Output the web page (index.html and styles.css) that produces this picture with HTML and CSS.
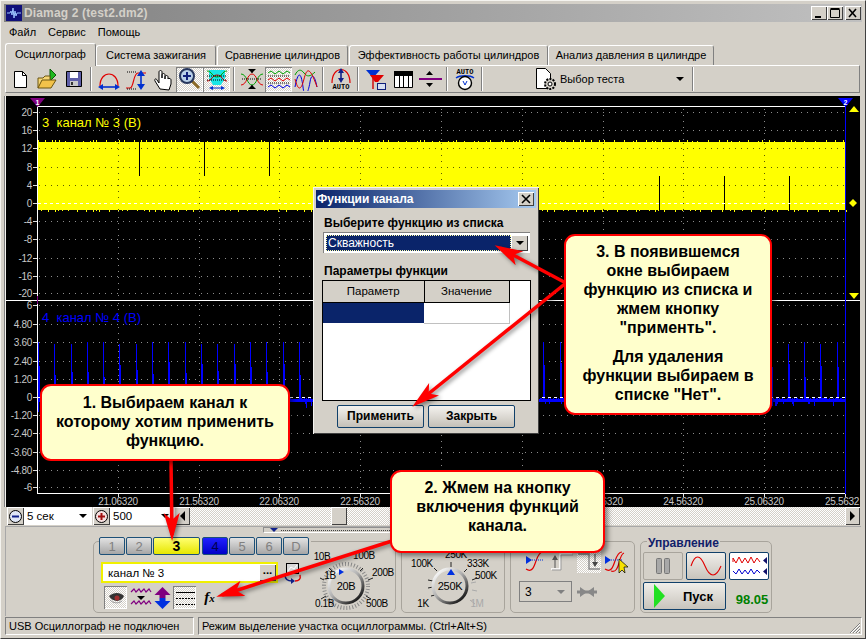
FILE: index.html
```html
<!DOCTYPE html>
<html lang="ru">
<head>
    <meta charset="UTF-8">
    <title>Diamag 2 (test2.dm2)</title>
    <link rel="stylesheet" href="styles.css">
</head>
<body>

<div class="window">

    <div class="titlebar">
        <svg class="app-icon" width="16" height="16" viewBox="0 0 16 16"><rect width="16" height="16" fill="#10107a"/><path d="M1 8h3l1-2 1 4 1-7 1 10 1-7 1 5 1-3h4" fill="none" stroke="#9cc4ff"/></svg>
        <span class="title-text">Diamag 2 (test2.dm2)</span>
        <div class="caption-btn cap-min"><svg width="15" height="14" viewBox="0 0 15 14"><rect x="4" y="10" width="6" height="2" fill="#000"/></svg></div>
        <div class="caption-btn cap-max"><svg width="15" height="14" viewBox="0 0 15 14"><path d="M3.5 3.5h9v8h-9z M3.5 2.5h9" fill="none" stroke="#000"/></svg></div>
        <div class="caption-btn cap-close"><svg width="15" height="14" viewBox="0 0 15 14"><path d="M4 3l7 8M11 3l-7 8" stroke="#000" stroke-width="1.6"/></svg></div>
    </div>

    <div class="menubar">
        <span>Файл</span><span>Сервис</span><span>Помощь</span>
    </div>

    <div class="tabs">
        <div class="tab tab-active">Осциллограф</div>
        <div class="tab tab-2">Система зажигания</div>
        <div class="tab tab-3">Сравнение цилиндров</div>
        <div class="tab tab-4">Эффективность работы цилиндров</div>
        <div class="tab tab-5">Анализ давления в цилиндре</div>
    </div>

    <div class="toolbar">
        <div class="tool"><svg width="24" height="24" viewBox="0 0 24 24"><path d="M6.5 4.5h8l4 4v12h-12z" fill="#fff" stroke="#000"/><path d="M14.5 4.5v4h4" fill="none" stroke="#000"/></svg></div>
        <div class="tool"><svg width="24" height="24" viewBox="0 0 24 24"><path d="M15 2l6 6-6 6z" fill="#1fb81f" stroke="#0a5a0a"/><path d="M3 21V11h5l2-2h5v3" fill="#f6d675" stroke="#6b5410"/><path d="M3 21l4-8h14l-5 8z" fill="#f2c24a" stroke="#6b5410"/></svg></div>
        <div class="tool"><svg width="24" height="24" viewBox="0 0 24 24"><path d="M4.500 4.500h15v15h-15z" fill="#5f5fa8" stroke="#000"/><rect x="8" y="5" width="8" height="6" fill="#fff"/><rect x="8" y="14" width="8" height="5" fill="#c8c8c8"/><rect x="9" y="15" width="2" height="3" fill="#333"/></svg></div>
        <div class="tool-sep"></div>
        <div class="tool"><svg width="24" height="24" viewBox="0 0 24 24"><path d="M3 19C3 3 21 3 21 19" fill="none" stroke="#e00000" stroke-width="1.2"/><path d="M4 20h16" stroke="#0030d0" stroke-width="1.6"/><path d="M1 20l5-3v6zM23 20l-5-3v6z" fill="#0030d0"/></svg></div>
        <div class="tool"><svg width="24" height="24" viewBox="0 0 24 24"><path d="M2 21h4c4 0 3-15 8-15h8" fill="none" stroke="#e00000" stroke-width="1.2"/><path d="M3 5h10M3 22h9" stroke="#000" stroke-dasharray="1 1"/><path d="M17 8v12" stroke="#0030d0" stroke-width="1.6"/><path d="M17 3l4 6h-8zM17 23l4-6h-8z" fill="#0030d0"/></svg></div>
        <div class="tool"><svg width="24" height="24" viewBox="0 0 24 24"><path d="M9 22l-5-8c-1-2 1-3 2-1l2 3V5c0-2 3-2 3 0v6-3c0-2 3-2 3 0v4-2c0-2 3-2 3 0v2c0-1 3-1 3 1v4l-2 6z" fill="#fff" stroke="#000"/></svg></div>
        <div class="tool tool-on"><svg width="24" height="24" viewBox="0 0 24 24"><path d="M14 14l7 7" stroke="#8a6a28" stroke-width="3"/><circle cx="9" cy="9" r="7" fill="#b8d0e8" stroke="#26365c" stroke-width="2"/><path d="M5 9h8M9 5v8" stroke="#10207a" stroke-width="2"/></svg></div>
        <div class="tool tool-on"><svg width="24" height="24" viewBox="0 0 24 24"><path d="M4 3h16v8l-4 7H8l-4-7z" fill="#19e6e6"/><path d="M2 4c5 0 5 6 10 6s5-6 10-6" fill="none" stroke="#00a000"/><path d="M2 14c5 0 5-6 10-6s5 6 10 6" fill="none" stroke="#d00000"/><path d="M2 9h20M2 13h20" stroke="#000" stroke-dasharray="1 1"/><path d="M6 21h12" stroke="#0030d0"/><path d="M4 21l4-2v4zM20 21l-4-2v4z" fill="#0030d0"/></svg></div>
        <div class="tool-sep"></div>
        <div class="tool"><svg width="24" height="24" viewBox="0 0 24 24"><path d="M1 7c6 0 6 11 11 11s5-11 11-11" fill="none" stroke="#00a000"/><path d="M1 18c6 0 6-11 11-11s5 11 11 11" fill="none" stroke="#e00000"/><path d="M2 12h20" stroke="#000" stroke-dasharray="1 1"/><path d="M12 3v3M12 18v3" stroke="#000"/><path d="M8 2h8l-4 4zM8 22h8l-4-4z" fill="#000"/></svg></div>
        <div class="tool tool-on"><svg width="24" height="24" viewBox="0 0 24 24"><path d="M1 6l3-2 4 3 4-3 4 3 4-3 3 2" fill="none" stroke="#00a000"/><path d="M1 13l3-2 4 3 4-3 4 3 4-3 3 2" fill="none" stroke="#e00000"/><path d="M1 20l3-2 4 3 4-3 4 3 4-3 3 2" fill="none" stroke="#0000e0"/><path d="M1 9h22M1 16h22" stroke="#000" stroke-dasharray="1 1"/></svg></div>
        <div class="tool"><svg width="24" height="24" viewBox="0 0 24 24"><path d="M1 8c3-6 6-6 9-2s6 4 11-1" fill="none" stroke="#00a000"/><path d="M1 20c3-16 6-16 8 0s6 2 7-5 4-10 7 5" fill="none" stroke="#0000e0"/><path d="M1 12c3 12 6 12 9 0s6-12 13 8" fill="none" stroke="#e00000"/></svg></div>
        <div class="tool-sep"></div>
        <div class="tool"><svg width="24" height="24" viewBox="0 0 24 24"><path d="M3 16C3 -2 21 -2 21 16" fill="none" stroke="#e00000" stroke-width="1.2"/><path d="M12 4v9" stroke="#10208a" stroke-width="1.6"/><path d="M12 1l3 5H9zM12 16l3-5H9z" fill="#10208a"/><text class="icon-auto" x="12" y="22" text-anchor="middle">AUTO</text></svg></div>
        <div class="tool-sep"></div>
        <div class="tool"><svg width="24" height="24" viewBox="0 0 24 24"><path d="M2 3h14l-7 8z" fill="#0030d0"/><path d="M9 11v11" stroke="#d00000" stroke-width="1.4"/><path d="M6 8h14l-6 7h-3z" fill="#e00000"/><rect x="13.500" y="16.500" width="8" height="6" fill="#d8e0f0" stroke="#10207a"/></svg></div>
        <div class="tool"><svg width="24" height="24" viewBox="0 0 24 24"><path d="M3.500 4.500h18v16h-18z M3.500 8.500h18 M8.500 4.500v16 M12.500 4.500v16 M17.500 4.500v16" fill="#fff" stroke="#000"/><rect x="3" y="4" width="19" height="4" fill="#000"/></svg></div>
        <div class="tool"><svg width="24" height="24" viewBox="0 0 24 24"><path d="M1 12h23" stroke="#800080" stroke-width="2"/><path d="M8 8h7l-3.500-4zM8 16h7l-3.500 4z" fill="#000"/></svg></div>
        <div class="tool-sep"></div>
        <div class="tool"><svg width="24" height="24" viewBox="0 0 24 24"><text class="icon-auto" x="12" y="7" text-anchor="middle">AUTO</text><path d="M3 11c4-3 14-3 18 0" fill="none" stroke="#0030d0" stroke-width="1.4"/><circle cx="12" cy="16" r="6.500" fill="#fff" stroke="#000" stroke-width="1.4"/><path d="M10 14l2 4 2-4" fill="none" stroke="#0030d0"/></svg></div>
        <div class="tool-sep"></div>
        <div class="test-select">
            <svg width="24" height="24" viewBox="0 0 24 24"><path d="M2.500 1.500h9l5 5v15h-14z" fill="#fff" stroke="#000"/><circle cx="16" cy="17" r="5" fill="#d4d0c8" stroke="#000" stroke-width="2" stroke-dasharray="2 1.200"/><circle cx="16" cy="17" r="2" fill="#fff" stroke="#000"/></svg>
            <span class="test-label">Выбор теста</span>
            <span class="drop-arrow"></span>
        </div>
        <div class="tool-sep"></div>
    </div>

    <div class="scope">
        <svg id="plot" width="854" height="412" viewBox="6 96 854 412"></svg>
    </div>

    <div class="scrollrow">
        <div class="small-btn"><svg width="15" height="15" viewBox="0 0 15 15"><circle cx="7.500" cy="7.500" r="6" fill="#dfe6f5" stroke="#000"/><path d="M4 7.500h7" stroke="#10208a" stroke-width="2"/></svg></div>
        <div class="time-combo combo-sec"><span>5 сек</span><span class="drop-arrow"></span></div>
        <div class="small-btn btn-plus"><svg width="15" height="15" viewBox="0 0 15 15"><circle cx="7.500" cy="7.500" r="6" fill="#f5dfdf" stroke="#000"/><path d="M4 7.500h7M7.500 4v7" stroke="#a01010" stroke-width="2"/></svg></div>
        <div class="time-combo combo-pts"><span>500</span><span class="drop-arrow"></span></div>
        <div class="small-btn scroll-left"><span class="tri-left"></span></div>
        <div class="track"><div class="thumb"></div></div>
        <div class="small-btn scroll-right"><span class="tri-right"></span></div>
    </div>

    <div class="bottom">
        <div class="splitter"><span class="tri-down"></span><span class="split-dots"></span></div>
        <div class="groups">

            <div class="group group-channels">
                <div class="channel-col">
                    <div class="channels">
                        <div class="ch">1</div>
                        <div class="ch">2</div>
                        <div class="ch ch-yellow">3</div>
                        <div class="ch ch-blue">4</div>
                        <div class="ch">5</div>
                        <div class="ch">6</div>
                        <div class="ch">D</div>
                    </div>
                    <div class="name-row">
                        <div class="name-box"><span>канал № 3</span><div class="dots-btn">...</div></div>
                        <svg width="18" height="22" viewBox="0 0 18 22"><rect x="2.500" y="1.500" width="12" height="10" fill="#d8d8d8" stroke="#000"/><path d="M4 9l3-4 3 2 3-4" fill="none" stroke="#fff"/><path d="M1 13c0 5 3 6 7 6" fill="none" stroke="#10208a" stroke-width="1.400"/><path d="M7 16v6l4-3z" fill="#10208a"/><path d="M16 13c1 4-1 6-5 6" fill="none" stroke="#e00000" stroke-width="1.400"/></svg>
                    </div>
                    <div class="icon-row">
                        <div class="mini mini-on"><svg width="22" height="22" viewBox="0 0 22 22"><path d="M4 9c5-4 11-4 15 0-2 6-11 7-15 0z" fill="#333"/><circle cx="12" cy="11" r="2.500" fill="#a03030"/><path d="M5 13c3 3 8 4 12 1" fill="none" stroke="#999"/></svg></div>
                        <div class="mini"><svg width="22" height="22" viewBox="0 0 22 22"><path d="M1 5l3-3 2 3 3-3 2 3 3-3 2 3 3-3 2 3" fill="none" stroke="#800080" stroke-width="1.200"/><path d="M1 17l3-3 2 3 3-3 2 3 3-3 2 3 3-3 2 3" fill="none" stroke="#800080" stroke-width="1.200"/><path d="M7 9h8l-4 4z" fill="#000"/></svg></div>
                        <div class="mini mini-arrows"><svg width="17" height="22" viewBox="0 0 17 22"><path d="M8.500 0l8 8h-5v3h-6V8h-5z" fill="#800080"/><path d="M8.500 22l8-8h-5v-3h-6v3h-5z" fill="#0030e0"/></svg></div>
                        <div class="mini mini-on"><svg width="22" height="22" viewBox="0 0 22 22"><path d="M2 5.500h19" stroke="#000"/><path d="M2 11.500h19M2 17.500h19" stroke="#000" stroke-dasharray="2 1"/></svg></div>
                        <div class="mini fx"><span>f</span><span class="fx-x">x</span></div>
                    </div>
                </div>
                <svg class="knob-svg" width="84" height="70" viewBox="311 544 84 70">
                    <defs>
                        <linearGradient id="ring" x1="0.150" y1="0.100" x2="0.850" y2="0.900">
                            <stop offset="0" stop-color="#f4f4f4"/><stop offset="0.450" stop-color="#b0b0b0"/><stop offset="1" stop-color="#1c1c1c"/>
                        </linearGradient>
                    </defs>
                    <circle cx="346" cy="588" r="22" fill="none" stroke="#888" stroke-width="4" stroke-dasharray="1 2"/>
                    <path d="M332 573l-3-3M360 573l3-3M368 582l5-2M324 582l-4-2M326 598l-5 3M366 598l5 3" stroke="#222"/>
                    <circle cx="346" cy="588" r="17" fill="#d4d0c8" stroke="url(#ring)" stroke-width="3"/>
                    <path d="M339 571v6l5-3z" fill="#0030e0"/>
                    <text class="knob-val" x="346" y="592" text-anchor="middle">20В</text>
                    <text class="knob-lbl" x="322" y="562" text-anchor="middle">10В</text>
                    <text class="knob-lbl" x="364" y="561" text-anchor="middle">100В</text>
                    <text class="knob-lbl" x="383" y="578" text-anchor="middle">200В</text>
                    <text class="knob-lbl" x="330" y="581" text-anchor="middle">1В</text>
                    <text class="knob-lbl" x="315" y="609" text-anchor="start">0.1В</text>
                    <text class="knob-lbl" x="377" y="609" text-anchor="middle">500В</text>
                </svg>
            </div>

            <div class="group group-time">
                <svg class="knob-svg" width="102" height="70" viewBox="402 544 102 70">
                    <defs>
                        <linearGradient id="ring2" x1="0.150" y1="0.100" x2="0.850" y2="0.900">
                            <stop offset="0" stop-color="#f4f4f4"/><stop offset="0.450" stop-color="#b0b0b0"/><stop offset="1" stop-color="#1c1c1c"/>
                        </linearGradient>
                    </defs>
                    <path d="M451 569v-5M437 573l-3-3M464 574l3-3M472 582l5-2M428 582l5 1M428 590l5-1M431 598l4-1" stroke="#222"/>
                    <path d="M470 602l5 4M472 592l5 1M471 585l5-1" stroke="#aaa"/>
                    <circle cx="450" cy="588" r="17" fill="#d4d0c8" stroke="url(#ring2)" stroke-width="3"/>
                    <path d="M451 571l4 6h-8z" fill="#0030e0"/>
                    <text class="knob-val" x="450" y="592" text-anchor="middle">250K</text>
                    <text class="knob-lbl" x="456" y="560" text-anchor="middle">250K</text>
                    <text class="knob-lbl" x="422" y="569" text-anchor="middle">100K</text>
                    <text class="knob-lbl" x="478" y="569" text-anchor="middle">333K</text>
                    <text class="knob-lbl" x="486" y="581" text-anchor="middle">500K</text>
                    <text class="knob-lbl" x="423" y="609" text-anchor="middle">1K</text>
                    <text class="knob-lbl knob-off" x="477" y="609" text-anchor="middle">1M</text>
                </svg>
            </div>

            <div class="group group-sync">
                <div class="sync-icons">
                    <div class="sync-icon"><svg width="24" height="24" viewBox="0 0 24 24"><path d="M3 20c6 4 8-2 10-8s4-9 7-9" fill="none" stroke="#e00000" stroke-width="1.200"/><path d="M7 11h14" stroke="#0030e0" stroke-dasharray="1 1"/><path d="M3 7v8l6-4z" fill="#0030e0"/></svg></div>
                    <div class="sync-icon"><svg width="24" height="24" viewBox="0 0 24 24"><path d="M1 20h9V5h12" fill="none" stroke="#fff" stroke-width="1.600"/><path d="M2 21h9V6h12" fill="none" stroke="#999"/><path d="M5 10v9" stroke="#555"/><path d="M5 6l3 5H2z" fill="#555"/></svg></div>
                    <div class="sync-icon sync-on"><svg width="24" height="24" viewBox="0 0 24 24"><path d="M1 5h11v15h11" fill="none" stroke="#888" stroke-width="1.400"/><path d="M18 5v9" stroke="#444"/><path d="M18 18l3-5h-6z" fill="#444"/></svg></div>
                    <div class="sync-icon"><svg width="24" height="24" viewBox="0 0 24 24"><path d="M1 20c6 4 8-2 10-8s4-9 7-9" fill="none" stroke="#e00000" stroke-width="1.200"/><path d="M7 22c5 2 7-4 8-8s2-9 5-10" fill="none" stroke="#e00000" stroke-width="1.200"/><path d="M5 11h14" stroke="#0030e0" stroke-dasharray="1 1"/><path d="M1 7v8l6-4z" fill="#0030e0"/><path d="M15 10v14l3-3 3 3-1-6h4z" fill="#f6e000" stroke="#000" stroke-width="0.700"/></svg></div>
                </div>
                <div class="sync-row">
                    <div class="combo-off"><span>3</span><span class="drop-arrow arrow-off"></span></div>
                    <svg width="20" height="12" viewBox="0 0 20 12"><path d="M0 6h20" stroke="#888" stroke-width="3"/><path d="M3 1l7 5-7 5zM17 1l-7 5 7 5z" fill="#888"/></svg>
                </div>
            </div>

            <div class="group group-control">
                <div class="control-title">Управление</div>
                <div class="control-grid">
                    <div class="ctl ctl-flat"><svg width="20" height="20" viewBox="0 0 20 20"><rect x="3.500" y="2.500" width="5" height="15" rx="1" fill="#a8a8a8" stroke="#777"/><rect x="11.500" y="2.500" width="5" height="15" rx="1" fill="#a8a8a8" stroke="#777"/></svg></div>
                    <div class="ctl"><svg width="34" height="26" viewBox="0 0 34 26"><path d="M2 13C6 1 11 1 16 13s11 12 16 0" fill="none" stroke="#e00000" stroke-width="1.100"/></svg></div>
                    <div class="ctl ctl-white"><svg width="36" height="24" viewBox="0 0 36 24"><path d="M2 8V4l3 5 3-6 3 6 3-5 3 5 3-6 3 6 3-5 3 4" fill="none" stroke="#e00000"/><path d="M2 17l3 3 3-5 3 5 3-4 3 4 3-5 3 5 3-4 3 3" fill="none" stroke="#0000d0"/><path d="M36 3v7l-4-3.500zM36 14v7l-4-3.500z" fill="#10106a"/></svg></div>
                    <div class="ctl ctl-run"><svg width="12" height="26" viewBox="0 0 12 26"><path d="M1 1l11 12L1 25z" fill="#22e022"/></svg><span>Пуск</span></div>
                    <div class="rate">98.05</div>
                </div>
            </div>

        </div>
    </div>

    <div class="statusbar">
        <div class="status-cell status-left">USB Осциллограф не подключен</div>
        <div class="status-cell status-right">Режим выделение участка осциллограммы. (Ctrl+Alt+S)
            <svg class="grip" width="13" height="13" viewBox="0 0 13 13"><path d="M12 2L2 12M12 5l-7 7M12 8l-4 4M12 11l-1 1" stroke="#808080"/><path d="M12 3L3 12M12 6l-6 6M12 9l-3 3" stroke="#fff"/></svg>
        </div>
    </div>
</div>

<div class="dialog">
    <div class="dialog-title">
        <span>Функции канала</span>
        <div class="dialog-close"><svg width="16" height="14" viewBox="0 0 16 14"><path d="M4 3l8 8M12 3l-8 8" stroke="#000" stroke-width="1.600"/></svg></div>
    </div>
    <div class="dialog-body">
        <div class="dialog-label">Выберите функцию из списка</div>
        <div class="func-combo">
            <div class="func-value">Скважность</div>
            <div class="func-btn"><span class="drop-arrow"></span></div>
        </div>
        <div class="dialog-label label-params">Параметры функции</div>
        <div class="params">
            <table>
                <tr><th class="col-a">Параметр</th><th class="col-b">Значение</th></tr>
                <tr><td class="cell-sel"></td><td class="cell-empty"></td></tr>
            </table>
        </div>
        <div class="dialog-buttons">
            <div class="dlg-btn">Применить</div>
            <div class="dlg-btn">Закрыть</div>
        </div>
    </div>
</div>

<svg class="arrows" width="866" height="639" viewBox="0 0 866 639">
    <defs>
        <marker id="head" markerUnits="userSpaceOnUse" markerWidth="30" markerHeight="18" refX="22" refY="8" orient="auto">
            <polygon points="0,0 28,8 0,16 7,8" fill="#ff0000"/>
        </marker>
    </defs>
    <line x1="171" y1="461" x2="172" y2="535" marker-end="url(#head)"/>
    <line x1="392" y1="541" x2="222" y2="595" marker-end="url(#head)"/>
    <line x1="566" y1="283" x2="500" y2="248" marker-end="url(#head)"/>
    <line x1="566" y1="283" x2="417" y2="403" marker-end="url(#head)"/>
</svg>

<div class="callout callout-1">1. Выбираем канал к<br>которому хотим применить<br>функцию.</div>
<div class="callout callout-2">2. Жмем на кнопку<br>включения функций<br>канала.</div>
<div class="callout callout-3">
    <p>3. В появившемся<br>окне выбираем<br>функцию из списка и<br>жмем кнопку<br>"применть".</p>
    <p>Для удаления<br>функции выбираем в<br>списке "Нет".</p>
</div>

<script src="scope.js"></script>
</body>
</html>
```

FILE: styles.css
```css
* {
    box-sizing: border-box;
}
body {
    margin: 0;
    width: 866px;
    height: 639px;
    overflow: hidden;
    position: relative;
    font-family: "Liberation Sans", Arial, sans-serif;
    font-size: 11px;
    color: #000;
    background: #d4d0c8;
}
.window {
    width: 866px;
    height: 639px;
    padding: 4px 4px 3px;
    display: flex;
    flex-direction: column;
    background: #d4d0c8;
    border-top: 1px solid #f4f3ef;
    border-left: 1px solid #f4f3ef;
    border-right: 1px solid #404040;
    border-bottom: 1px solid #404040;
}

/* title and menu */
.titlebar {
    height: 18px;
    margin: -1px -1px 0 -1px;
    display: flex;
    align-items: center;
    padding: 0 1px 0 2px;
    background: linear-gradient(to right, #808080, #c0c0c0);
}
.app-icon {
    margin-right: 2px;
    flex: none;
}
.title-text {
    flex: 1;
    font-weight: bold;
    font-size: 12px;
    letter-spacing: 0.15px;
    color: #d4d0c8;
}
.caption-btn {
    width: 16px;
    height: 14px;
    background: #d4d0c8;
    box-shadow: inset 1px 1px 0 #fff, inset -1px -1px 0 #404040;
}
.cap-close {
    margin-left: 2px;
}
.menubar {
    height: 20px;
    margin-left: 4px;
    display: flex;
    align-items: center;
    gap: 12px;
}

/* tabs */
.tabs {
    height: 23px;
    display: flex;
    align-items: flex-end;
    white-space: nowrap;
}
.tab {
    height: 20px;
    padding-top: 3px;
    text-align: center;
    background: #d4d0c8;
    border: 1px solid #fff;
    border-bottom: 0;
    border-right: 1px solid #808080;
    border-radius: 3px 3px 0 0;
}
.tab-active {
    width: 91px;
    height: 23px;
    margin-bottom: -1px;
    position: relative;
    z-index: 1;
    padding-top: 4px;
}
.tab-2 {
    width: 120px;
}
.tab-3 {
    width: 131px;
    margin-left: 1px;
}
.tab-4 {
    width: 199px;
    margin-left: 1px;
}
.tab-5 {
    width: 166px;
}

/* toolbar */
.toolbar {
    height: 28px;
    margin: 0 1px 3px 0;
    display: flex;
    align-items: center;
    border-top: 1px solid #fff;
    border-left: 1px solid #fff;
    border-right: 1px solid #808080;
    border-bottom: 1px solid #808080;
}
.tool {
    width: 27px;
    height: 25px;
    display: flex;
    align-items: center;
    justify-content: center;
}
.tool-on {
    background: repeating-conic-gradient(#fff 0 25%, #d4d0c8 0 50%) 0 0 / 2px 2px;
    box-shadow: inset 1px 1px 0 #808080, inset -1px -1px 0 #fff;
}
.tool-sep {
    width: 2px;
    height: 24px;
    margin: 0 3px;
    background: #808080;
    border-right: 1px solid #fff;
}
.icon-auto {
    font-family: "Liberation Mono", monospace;
    font-weight: bold;
    font-size: 7px;
    fill: #000;
}
.test-select {
    width: 203px;
    padding-left: 48px;
    display: flex;
    align-items: center;
}
.test-label {
    margin-left: 2px;
    flex: 1;
}
.test-select .drop-arrow {
    margin-right: 5px;
}
.drop-arrow {
    width: 0;
    height: 0;
    border-left: 4px solid transparent;
    border-right: 4px solid transparent;
    border-top: 4px solid #000;
    display: block;
    flex: none;
}
.arrow-off {
    border-top-color: #808080;
}

/* plot */
.scope {
    flex: 1;
    margin: 0 1px 0 1px;
    background: #000;
    box-shadow: -1px 0 0 #f4f3ef, -2px 0 0 #808080;
    min-height: 0;
}
#plot {
    display: block;
    shape-rendering: crispEdges;
    font-family: "Liberation Sans", Arial, sans-serif;
}
.axis-label {
    font-size: 10px;
    letter-spacing: -0.3px;
    fill: #c8c8c8;
}
.chan-name {
    font-size: 13px;
    white-space: pre;
}

/* horizontal scroll row */
.scrollrow {
    height: 19px;
    margin: 0 1px 0 2px;
    display: flex;
    align-items: flex-start;
    flex: none;
}
.small-btn {
    width: 17px;
    height: 18px;
    flex: none;
    display: flex;
    align-items: center;
    justify-content: center;
    background: #d4d0c8;
    box-shadow: inset 1px 1px 0 #fff, inset -1px -1px 0 #404040;
}
.btn-plus {
    margin-left: 1px;
}
.scroll-left {
    width: 16px;
}
.scroll-right {
    width: 15px;
}
.time-combo {
    height: 18px;
    flex: none;
    display: flex;
    align-items: center;
    justify-content: space-between;
    padding: 0 5px 0 3px;
    background: #fff;
    font-size: 11.500px;
}
.combo-sec {
    width: 68px;
}
.combo-pts {
    width: 64px;
}
.track {
    flex: 1;
    height: 18px;
    padding-left: 141px;
    background: repeating-conic-gradient(#fff 0 25%, #d4d0c8 0 50%) 0 0 / 2px 2px;
}
.thumb {
    width: 16px;
    height: 18px;
    background: #d4d0c8;
    box-shadow: inset 1px 1px 0 #fff, inset -1px -1px 0 #404040;
}
.tri-left {
    border-top: 5px solid transparent;
    border-bottom: 5px solid transparent;
    border-right: 5px solid #000;
}
.tri-right {
    border-top: 5px solid transparent;
    border-bottom: 5px solid transparent;
    border-left: 5px solid #000;
}

/* bottom panel */
.bottom {
    height: 90px;
    flex: none;
    border-top: 1px solid #a8a8a8;
    border-left: 1px solid #a8a8a8;
}
.splitter {
    width: 338px;
    height: 6px;
    margin: 0 0 8px 257px;
    padding: 0 0 0 6px;
    display: flex;
    align-items: center;
    gap: 3px;
    background: #d4d0c8;
    border: 1px solid #909090;
    border-bottom-color: #fff;
    border-right-color: #fff;
}
.split-dots {
    flex: 1;
    border-top: 1px dotted #404040;
}
.tri-down {
    border-left: 4px solid transparent;
    border-right: 4px solid transparent;
    border-top: 4px solid #10208a;
}
.groups {
    display: flex;
    gap: 5px;
    padding-left: 87px;
    height: 73px;
}
.group {
    height: 72px;
    border: 1px solid #a8a49c;
    border-radius: 5px;
    flex: none;
}
.group-channels {
    width: 303px;
    display: flex;
    justify-content: space-between;
}
.group-time {
    width: 104px;
}
.group-sync {
    width: 125px;
    padding: 7px 0 0 8px;
}
.group-control {
    width: 132px;
    padding: 0 2px;
}
.channel-col {
    width: 212px;
    margin: -5px 0 0 5px;
}
.channels {
    display: flex;
    gap: 1px;
    height: 18px;
    background: #d4d0c8;
}
.ch {
    width: 26px;
    height: 18px;
    text-align: center;
    line-height: 17px;
    font-size: 13px;
    color: #808080;
    background: linear-gradient(#e2e2e2, #a6a6a6);
    border: 1px solid #1d5078;
    border-radius: 2px;
}
.ch-yellow {
    width: 47px;
    color: #000;
    font-weight: bold;
    font-size: 14px;
    background: linear-gradient(#ffff70, #e6e600);
}
.ch-blue {
    margin-left: 1px;
    color: #000050;
    background: linear-gradient(#2020ff, #0000c8);
}
.name-row {
    display: flex;
    align-items: center;
    gap: 6px;
    margin: 7px 0 0 2px;
    height: 21px;
}
.name-box {
    width: 177px;
    height: 21px;
    flex: none;
    display: flex;
    align-items: center;
    justify-content: space-between;
    padding-left: 5px;
    background: #fff;
    border: 2px solid #f0f000;
    font-size: 11.500px;
}
.dots-btn {
    width: 17px;
    height: 17px;
    text-align: center;
    font-weight: bold;
    background: #d4d0c8;
    box-shadow: inset 1px 1px 0 #fff, inset -1px -1px 0 #404040;
}
.icon-row {
    display: flex;
    align-items: center;
    gap: 2px;
    margin: 3px 0 0 5px;
}
.mini {
    width: 23px;
    height: 23px;
    display: flex;
    align-items: center;
    justify-content: center;
}
.mini-arrows {
    width: 17px;
}
.mini-on {
    background: repeating-conic-gradient(#fff 0 25%, #d4d0c8 0 50%) 0 0 / 2px 2px;
    box-shadow: inset 1px 1px 0 #808080, inset -1px -1px 0 #fff;
}
.fx {
    font-family: "Liberation Serif", serif;
    font-style: italic;
    font-weight: bold;
    font-size: 15px;
}
.fx-x {
    font-size: 11px;
}
.knob-svg {
    display: block;
    flex: none;
    overflow: visible;
    font-family: "Liberation Sans", Arial, sans-serif;
}
.knob-val {
    font-size: 11px;
    letter-spacing: -0.3px;
    fill: #000;
}
.knob-lbl {
    font-size: 10px;
    letter-spacing: -0.4px;
    fill: #000;
}
.knob-off {
    fill: #a8a8a8;
}
.sync-icons {
    display: flex;
    gap: 3px;
    margin-left: 4px;
}
.sync-icon {
    width: 24px;
    height: 24px;
}
.sync-on {
    background: repeating-conic-gradient(#fff 0 25%, #d4d0c8 0 50%) 0 0 / 2px 2px;
}
.sync-row {
    display: flex;
    align-items: center;
    gap: 5px;
    margin-top: 8px;
}
.combo-off {
    width: 53px;
    height: 21px;
    display: flex;
    align-items: center;
    justify-content: space-between;
    padding: 0 6px 0 5px;
    border: 1px solid #808080;
    font-size: 12px;
}
.control-title {
    width: fit-content;
    margin: -6px 0 0 4px;
    padding: 0 1px;
    height: 14px;
    background: #d4d0c8;
    font-weight: bold;
    font-size: 12px;
    color: #10206a;
}
.control-grid {
    display: grid;
    grid-template-columns: 40px 40px 40px;
    grid-template-rows: 28px 28px;
    gap: 2px 3px;
    margin-top: 2px;
}
.ctl {
    display: flex;
    align-items: center;
    justify-content: center;
    background: linear-gradient(#f0eeea, #c8c4bc);
    border: 1px solid #10406a;
    border-radius: 2px;
}
.ctl-flat {
    background: #d4d0c8;
    border-color: #a8a49c;
}
.ctl-white {
    background: #fff;
}
.ctl-run {
    grid-column: 1 / 3;
    justify-content: flex-start;
    padding-left: 9px;
    gap: 18px;
    font-weight: bold;
    font-size: 13px;
}
.rate {
    align-self: end;
    text-align: center;
    padding: 0 0 3px 6px;
    font-weight: bold;
    font-size: 13px;
    color: #008000;
}

/* status bar */
.statusbar {
    height: 18px;
    margin: 1px -1px 0 0;
    display: flex;
    gap: 4px;
    flex: none;
    white-space: nowrap;
}
.status-cell {
    height: 18px;
    display: flex;
    align-items: center;
    padding-left: 3px;
    border-top: 1px solid #808080;
    border-left: 1px solid #808080;
    border-right: 1px solid #fff;
    border-bottom: 1px solid #fff;
}
.status-left {
    width: 189px;
}
.status-right {
    flex: 1;
    justify-content: space-between;
    padding-right: 0;
}
.grip {
    align-self: flex-end;
}

/* dialog over the plot */
.dialog {
    position: absolute;
    left: 313px;
    top: 187px;
    width: 226px;
    height: 247px;
    padding: 3px;
    background: #d4d0c8;
    box-shadow: inset 1px 1px 0 #f4f3ef, inset -1px -1px 0 #404040;
}
.dialog-title {
    height: 18px;
    display: flex;
    align-items: center;
    justify-content: space-between;
    padding: 0 2px 0 1px;
    background: linear-gradient(to right, #0a246a, #a6caf0);
    font-weight: bold;
    font-size: 12px;
    color: #fff;
}
.dialog-close {
    width: 16px;
    height: 14px;
    background: #d4d0c8;
    box-shadow: inset 1px 1px 0 #fff, inset -1px -1px 0 #404040;
}
.dialog-body {
    padding: 8px 5px 0 6px;
}
.dialog-label {
    font-weight: bold;
    font-size: 12px;
    height: 15px;
    padding-left: 2px;
    white-space: nowrap;
}
.label-params {
    margin-top: 11px;
    margin-bottom: 1px;
}
.func-combo {
    width: 207px;
    height: 21px;
    margin: 1px 0 0 1px;
    padding: 2px;
    display: flex;
    background: #fff;
    border-top: 1px solid #808080;
    border-left: 1px solid #808080;
}
.func-value {
    flex: 1;
    padding: 1px 2px;
    background: #0a246a;
    color: #fff;
    font-size: 12px;
    outline: 1px dotted #ffffaa;
    outline-offset: -1px;
}
.func-btn {
    width: 17px;
    display: flex;
    align-items: center;
    justify-content: center;
    background: #d4d0c8;
    box-shadow: inset 1px 1px 0 #fff, inset -1px -1px 0 #404040;
}
.params {
    width: 209px;
    height: 121px;
    background: #fff;
    border: 1px solid #000;
}
.params table {
    border-collapse: collapse;
}
.params th {
    height: 21px;
    padding: 0;
    font-weight: normal;
    font-size: 11.500px;
    background: #d4d0c8;
    border-right: 1px solid #000;
    border-bottom: 1px solid #000;
}
.col-a {
    width: 101px;
}
.col-b {
    width: 85px;
}
.params td {
    height: 21px;
    padding: 0;
}
.cell-sel {
    background: #0a246a;
}
.cell-empty {
    border-right: 1px solid #c0c0c0;
    border-bottom: 1px solid #c0c0c0;
}
.dialog-buttons {
    display: flex;
    gap: 4px;
    margin: 4px 0 0 15px;
}
.dlg-btn {
    width: 87px;
    height: 23px;
    line-height: 21px;
    text-align: center;
    font-weight: bold;
    font-size: 12px;
    background: linear-gradient(#f4f2ee, #c4c0b8);
    border: 1px solid #10406a;
    border-radius: 2px;
}

/* arrows and callouts */
.arrows {
    position: absolute;
    left: 0;
    top: 0;
    filter: drop-shadow(2px 2px 2px rgba(0, 0, 0, 0.45));
}
.arrows line {
    stroke: #ff0000;
    stroke-width: 3.5;
}
.callout {
    position: absolute;
    background: #ffffcc;
    border: 2px solid #ff0000;
    border-radius: 11px;
    box-shadow: 3px 3px 5px rgba(0, 0, 0, 0.45);
    font-weight: bold;
    font-size: 16px;
    line-height: 19px;
    text-align: center;
}
.callout p {
    margin: 0 0 10px;
}
.callout-1 {
    left: 40px;
    top: 384px;
    width: 250px;
    height: 77px;
    padding-top: 7px;
}
.callout-2 {
    left: 390px;
    top: 470px;
    width: 215px;
    height: 83px;
    padding-top: 6px;
}
.callout-3 {
    left: 564px;
    top: 234px;
    width: 208px;
    height: 181px;
    padding-top: 6px;
}
```

FILE: scope.js
```js
// draws the two channels and the grid into #plot
const plot = document.getElementById('plot');
let out = '';

const gridX = [118, 199, 279, 360, 441, 522, 603, 683, 764];
const topY = [112, 130, 148, 167, 185, 203, 221, 239, 258, 276, 293];
const topLabels = ['20', '16', '12', '8', '4', '0', '-4', '-8', '-12', '-16', '-20'];
const lowY = [305, 324, 342, 361, 379, 397, 415, 433, 452, 470, 487];
const lowLabels = ['6', '4.80', '3.60', '2.40', '1.20', '0', '-1.20', '-2.40', '-3.60', '-4.80', '-6'];
// the two labels that stand under callout 2 are left out
const timeLabels = [[118, '21.06320'], [199, '21.56320'], [279, '22.06320'], [360, '22.56320'], [603, '24.06320'], [683, '24.56320'], [764, '25.06320']];

// same noise every run
let seed = 7;
function rnd() {
    seed = (seed * 1103515245 + 12345) % 2147483648;
    return seed / 2147483648;
}

function line(x1, y1, x2, y2, color, extra) {
    out += `<line x1="${x1}" y1="${y1}" x2="${x2}" y2="${y2}" stroke="${color}" ${extra || ''}/>`;
}

function dots(x1, y1, x2, y2, color) {
    line(x1 + 0.5, y1 + 0.5, x2 + 0.5, y2 + 0.5, color, 'stroke-dasharray="1 5"');
}

// grid on black
[topY, lowY].forEach(ys => {
    ys.forEach(y => {
        if (y !== 203 && y !== 397) dots(38, y, 845, y, '#8c8c8c');
        line(33, y + 0.5, 37, y + 0.5, '#ddd');
    });
});
gridX.forEach(x => {
    dots(x, 108, x, 299, '#8c8c8c');
    dots(x, 302, x, 492, '#8c8c8c');
});

// channel 3
out += '<rect x="38" y="142" width="807" height="68" fill="#ffff00"/>';
for (let x = 38; x < 845; x += 3 + Math.floor(rnd() * 9)) {
    line(x + 0.5, 142, x + 0.5, 141 - Math.floor(rnd() * 2), '#ffff00');
    line(x + 3.5, 210, x + 3.5, 211 + Math.floor(rnd() * 2), '#ffff00');
}
[148, 167, 185].forEach(y => dots(38, y, 845, y, '#5a5a00'));
gridX.forEach(x => dots(x, 142, x, 209, '#5a5a00'));
[139, 204, 269].forEach(x => line(x + 0.5, 142, x + 0.5, 176, '#000'));
[659, 724, 789].forEach(x => line(x + 0.5, 176, x + 0.5, 210, '#000'));

// channel 4
for (let x = 38; x < 845; x += 16.3) {
    const px = Math.round(x) + 0.5;
    line(px, 342 + Math.floor(rnd() * 2) * 2, px, 402, '#0000ff');
    line(px + 1, 362 + Math.floor(rnd() * 16), px + 1, 402, '#0000ff');
}
for (let x = 38; x < 845; x += 1) {
    line(x + 0.5, 398 + Math.floor(rnd() * 2), x + 0.5, 402 + Math.floor(rnd() * 4) * (rnd() < 0.25 ? 2 : 0), '#0000ff');
}
line(38.5, 397, 38.5, 412, '#0000ff');

// zero lines
line(38, 203.5, 845, 203.5, '#fff', 'stroke-dasharray="3 3"');
line(38, 397.5, 845, 397.5, '#fff', 'stroke-dasharray="3 3"');

// frame
line(37, 106.5, 845, 106.5, '#fff');
line(6, 300.5, 860, 300.5, '#fff');
line(37, 493.5, 845, 493.5, '#fff');
line(37.5, 106, 37.5, 494, '#fff');
line(37.5, 296, 37.5, 304, '#800080');
line(845.5, 106, 845.5, 494, '#0000ff');

// labels
topY.forEach((y, i) => {
    out += `<text class="axis-label" x="32" y="${y + 4}" text-anchor="end">${topLabels[i]}</text>`;
});
lowY.forEach((y, i) => {
    out += `<text class="axis-label" x="32" y="${y + 4}" text-anchor="end">${lowLabels[i]}</text>`;
});
gridX.concat(845).forEach(x => line(x + 0.5, 494, x + 0.5, 497, '#ddd'));
timeLabels.forEach(t => {
    out += `<text class="axis-label" x="${t[0]}" y="505" text-anchor="middle">${t[1]}</text>`;
});
out += '<text class="axis-label" x="825" y="505">25.5632</text>';
out += '<text class="chan-name" x="42" y="127" fill="#ffff00">3  канал № 3 (В)</text>';
out += '<text class="chan-name" x="42" y="322" fill="#0000ff">4  канал № 4 (В)</text>';

// cursors
out += '<path d="M30 98h15l-7.500 9z" fill="#800080" shape-rendering="auto"/>';
out += '<text x="37.500" y="105" text-anchor="middle" font-size="7" font-weight="bold" fill="#fff">1</text>';
out += '<path d="M838 98h15l-7.500 9z" fill="#0000ff" shape-rendering="auto"/>';
out += '<text x="845.500" y="105" text-anchor="middle" font-size="7" font-weight="bold" fill="#fff">2</text>';
out += '<path d="M854 106l5 6h-10z" fill="#ffff00" shape-rendering="auto"/>';
out += '<path d="M853 199l4 4-4 4-4-4z" fill="#ffff00" shape-rendering="auto"/>';
out += '<path d="M849 293h10l-5 6z" fill="#ffff00" shape-rendering="auto"/>';

plot.innerHTML = out;
```
